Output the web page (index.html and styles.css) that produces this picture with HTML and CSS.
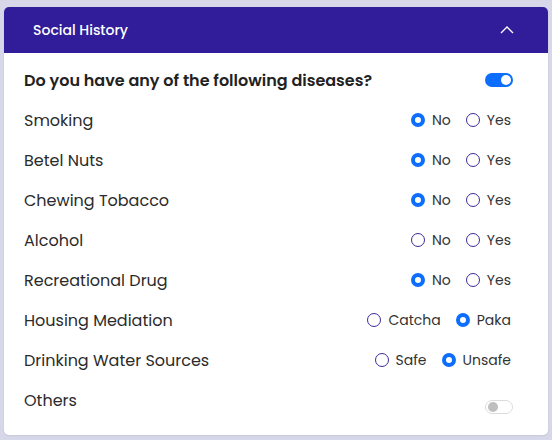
FILE: index.html
```html
<!DOCTYPE html>
<html>
<head>
<meta charset="utf-8">
<link rel="stylesheet" href="styles.css">
</head>
<body>
<div class="card">
  <div class="card-header">
    <span class="title">Social History</span>
    <svg class="chev" width="14" height="8" viewBox="0 0 14 8"><path d="M1 7 L7 1 L13 7" fill="none" stroke="#fff" stroke-width="1.3"/></svg>
  </div>
  <div class="card-body">
    <div class="row">
      <span class="q">Do you have any of the following diseases?</span>
      <span class="switch on"><span class="knob"></span></span>
    </div>
    <div class="row">
      <span class="label">Smoking</span>
      <div class="opts"><span class="opt"><span class="radio checked"></span>No</span><span class="opt"><span class="radio"></span>Yes</span></div>
    </div>
    <div class="row">
      <span class="label">Betel Nuts</span>
      <div class="opts"><span class="opt"><span class="radio checked"></span>No</span><span class="opt"><span class="radio"></span>Yes</span></div>
    </div>
    <div class="row">
      <span class="label">Chewing Tobacco</span>
      <div class="opts"><span class="opt"><span class="radio checked"></span>No</span><span class="opt"><span class="radio"></span>Yes</span></div>
    </div>
    <div class="row">
      <span class="label">Alcohol</span>
      <div class="opts"><span class="opt"><span class="radio"></span>No</span><span class="opt"><span class="radio"></span>Yes</span></div>
    </div>
    <div class="row">
      <span class="label">Recreational Drug</span>
      <div class="opts"><span class="opt"><span class="radio checked"></span>No</span><span class="opt"><span class="radio"></span>Yes</span></div>
    </div>
    <div class="row">
      <span class="label">Housing Mediation</span>
      <div class="opts"><span class="opt"><span class="radio"></span>Catcha</span><span class="opt"><span class="radio checked"></span>Paka</span></div>
    </div>
    <div class="row">
      <span class="label">Drinking Water Sources</span>
      <div class="opts"><span class="opt"><span class="radio"></span>Safe</span><span class="opt"><span class="radio checked"></span>Unsafe</span></div>
    </div>
    <div class="row">
      <span class="label">Others</span>
      <span class="switch off low"><span class="knob"></span></span>
    </div>
  </div>
</div>
</body>
</html>
```
FILE: styles.css
```css
* { box-sizing: border-box; }
html, body { margin: 0; padding: 0; }
body {
  background: #d6d8ea;
  width: 552px;
  height: 440px;
  padding: 7px 4px 5px 4px;
  font-family: "Poppins", "Open Sans", "Noto Sans", sans-serif;
}
.card {
  background: #fff;
  border-radius: 5px;
  height: 428px;
  width: 544px;
  box-shadow: 0 1px 2px rgba(0,0,0,0.08);
  overflow: hidden;
}
.card-header {
  background: #311c99;
  height: 46px;
  display: flex;
  align-items: center;
  justify-content: space-between;
  padding: 0 34px 0 29px;
}
.title {
  color: #fff;
  font-size: 14px;
  font-weight: 500;
}
.chev { display: block; margin-top: -1px; }
.card-body {
  padding: 7px 35px 0 20px;
}
.row {
  height: 40px;
  display: flex;
  align-items: center;
  justify-content: space-between;
}
.q {
  font-size: 16px;
  font-weight: 600;
  color: #222;
}
.label {
  font-size: 16px;
  color: #2b2b2b;
}
.opts {
  display: flex;
  gap: 15px;
  margin-right: 2px;
}
.opt {
  display: flex;
  align-items: center;
  gap: 7px;
  font-size: 14px;
  color: #333;
}
.radio {
  width: 14px;
  height: 14px;
  border-radius: 50%;
  border: 1.3px solid #3a2a9e;
  background: #fff;
  display: inline-block;
}
.radio.checked {
  border: 4px solid #0d6efd;
  background: #fff;
}
.switch {
  width: 28px;
  height: 14px;
  border-radius: 7px;
  display: flex;
  align-items: center;
  padding: 0 2px;
}
.switch .knob {
  width: 10px;
  height: 10px;
  border-radius: 50%;
}
.switch.on { background: #0d6efd; justify-content: flex-end; }
.switch.on .knob { background: #fff; }
.switch.off { background: #fff; border: 1px solid #dcdcdc; justify-content: flex-start; }
.switch.off .knob { background: #bfbfbf; }
.switch.low { margin-top: 14px; }
```
